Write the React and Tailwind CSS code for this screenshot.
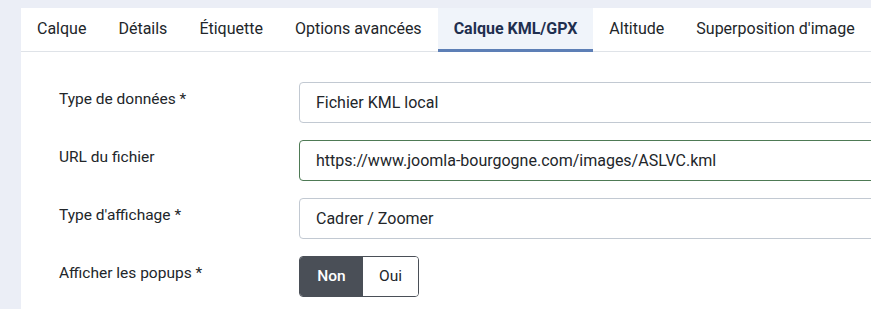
// Joomla-style tabbed form panel.
const TABS = [
  'Calque',
  'Détails',
  'Étiquette',
  'Options avancées',
  'Calque KML/GPX',
  'Altitude',
  "Superposition d'image",
];
const ACTIVE = 'Calque KML/GPX';

function Field({ label, children }) {
  return (
    <div className="flex items-start">
      <div className="w-[240px] shrink-0 pt-[5px] leading-6 text-[15.5px] text-[#22262a]">{label}</div>
      <div className="flex-1 min-w-0">{children}</div>
    </div>
  );
}

function Box({ value, focused }) {
  return (
    <div
      className={`h-[41px] w-[620px] flex items-center pl-4 rounded-[4px] border bg-white text-[16px] text-[#22262a] ${
        focused ? 'border-[#4e7a55]' : 'border-[#c2c9d2]'
      }`}
    >
      {value}
    </div>
  );
}

export default function App() {
  return (
    <div
      className="w-[871px] h-[309px] overflow-hidden bg-[#ebeef6] pl-[21px] pt-[8px]"
      style={{ fontFamily: 'Roboto, "Noto Sans", sans-serif' }}
    >
      <div className="bg-white h-full overflow-hidden">
        <div className="flex border-b border-[#dfe3e8] h-[44px] whitespace-nowrap">
          {TABS.map((t) => {
            const on = t === ACTIVE;
            return (
              <div
                key={t}
                className={`px-4 flex items-center text-[16px] border-b-[3px] -mb-px ${
                  on
                    ? 'bg-[#f0f4fa] border-[#5d7fb6] font-bold text-[#1f2f4f]'
                    : 'border-transparent text-[#22262a]'
                }`}
              >
                {t}
              </div>
            );
          })}
        </div>
        <div className="pl-[38px] pt-[30px] flex flex-col gap-[17px]">
          <Field label="Type de données *">
            <Box value="Fichier KML local" />
          </Field>
          <Field label="URL du fichier">
            <Box value="https://www.joomla-bourgogne.com/images/ASLVC.kml" focused />
          </Field>
          <Field label="Type d'affichage *">
            <Box value="Cadrer / Zoomer" />
          </Field>
          <Field label="Afficher les popups *">
            <div className="inline-flex h-[41px] rounded-[4px] border border-[#4a4f57] overflow-hidden text-[15.5px]">
              <div className="w-[63px] flex items-center justify-center bg-[#4a4f57] text-white font-medium">Non</div>
              <div className="w-[55px] flex items-center justify-center bg-white text-[#22262a]">Oui</div>
            </div>
          </Field>
        </div>
      </div>
    </div>
  );
}
